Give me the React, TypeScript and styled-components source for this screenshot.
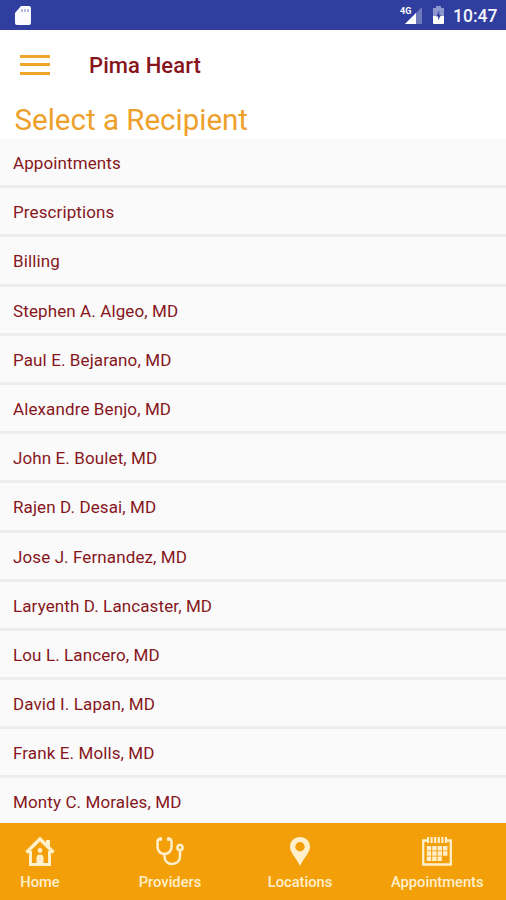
import React from 'react';
import styled, { createGlobalStyle } from 'styled-components';

const GlobalStyle = createGlobalStyle`
  * { box-sizing: border-box; }
  body { margin: 0; background: #fff; font-family: Roboto, sans-serif; overflow: hidden; }
`;

const Screen = styled.div`
  width: 506px;
  height: 900px;
  display: flex;
  flex-direction: column;
  overflow: hidden;
  background: #fff;
`;

const StatusBar = styled.div`
  flex: none;
  height: 30px;
  padding: 0 9px 0 14px;
  display: flex;
  align-items: center;
  justify-content: space-between;
  background: #303f9f;
  color: #f4f5fc;
`;

const StatusIcons = styled.div`
  display: flex;
  align-items: center;
  gap: 8px;
`;

const Clock = styled.span`
  width: 44px;
  padding-top: 2px;
  font-size: 17.5px;
  line-height: 20px;
  font-weight: 500;
  white-space: nowrap;
`;

const Header = styled.header`
  flex: none;
  height: 70px;
  padding-left: 20px;
  display: flex;
  align-items: center;
`;

const MenuButton = styled.button`
  width: 30px;
  height: 20px;
  margin: 0 39px 1px 0;
  padding: 0;
  border: 0;
  background: none;
  display: flex;
  flex-direction: column;
  justify-content: space-between;
`;

const MenuLine = styled.span`
  width: 30px;
  height: 3px;
  background: #f0a62b;
`;

const AppName = styled.h1`
  margin: 1px 0 0;
  font-size: 22px;
  line-height: 28px;
  font-weight: 500;
  letter-spacing: 0.1px;
  color: #86141a;
`;

const PageTitle = styled.h2`
  flex: none;
  height: 39px;
  margin: 0;
  padding-left: 14.5px;
  font-size: 29.5px;
  line-height: 40px;
  font-weight: 400;
  color: #eda02a;
`;

const List = styled.ul`
  flex: none;
  height: 684px;
  margin: 0;
  padding: 0;
  list-style: none;
  overflow: hidden;
  background: #fafafa;
`;

const Row = styled.li`
  height: 49.2px;
  padding: 1px 13px 0;
  border-bottom: 3px solid #ededed;
  font-size: 17px;
  line-height: 46px;
  letter-spacing: 0.11px;
  color: #86161c;
`;

const TabBar = styled.nav`
  flex: none;
  height: 77px;
  padding-top: 13px;
  display: flex;
  gap: 50px;
  background: #f39f09;
`;

const Tab = styled.div`
  flex: none;
  min-width: 80px;
  display: flex;
  flex-direction: column;
  align-items: center;
  color: #ffefcb;

  &:last-child {
    margin-left: 1px;
  }
`;

const TabLabel = styled.span`
  margin-top: 6px;
  font-size: 14.7px;
  line-height: 18px;
  font-weight: 500;
`;

const SdCardIcon = () => (
  <svg width="18" height="22" viewBox="0 0 18 22">
    <path d="M7 2h8a2 2 0 0 1 2 2v15a2 2 0 0 1-2 2H3a2 2 0 0 1-2-2V9z" fill="#fafaff" />
    <path d="M8 5v3M11 5v3M14 5v3" stroke="#8d95cb" strokeWidth="1.2" />
  </svg>
);

const SignalIcon = () => (
  <svg width="24" height="20" viewBox="0 0 24 20">
    <path d="M22 2v17H5z" fill="#6f7abd" />
    <path d="M16 8v11H5z" fill="#fff" />
    <text x="0" y="9" fontFamily="Roboto" fontSize="9" fontWeight="700" fill="#fff">4G</text>
  </svg>
);

const BatteryIcon = () => (
  <svg width="13" height="20" viewBox="0 0 13 20">
    <path d="M4 1h5v2h3v8H1V3h3z" fill="#8e97cd" />
    <path d="M1 11h11v7a1 1 0 0 1-1 1H2a1 1 0 0 1-1-1z" fill="#fff" />
    <path d="M7.200 5.500 4.200 11.500h2V15.500L9 10H7.200z" fill="#303f9f" />
  </svg>
);

const HomeIcon = () => (
  <svg width="30" height="31" viewBox="0 0 30 31" fill="none" stroke="currentColor">
    <path d="M1.500 16.500 15 3l13.500 13.500" strokeWidth="3.400" />
    <path d="M21 4h4v8l-4-4z" fill="currentColor" stroke="none" />
    <path d="M5.500 15v13.500h19V15" strokeWidth="3" />
    <path d="M11.500 30v-8a3.500 3.500 0 0 1 7 0v8z" fill="currentColor" stroke="none" />
    <circle cx="15" cy="14.500" r="2.400" fill="currentColor" stroke="none" />
  </svg>
);

const StethoscopeIcon = () => (
  <svg width="30" height="31" viewBox="0 0 30 31" fill="none" stroke="currentColor" strokeWidth="2.500" strokeLinecap="round">
    <path d="M5.500 3H4.500Q2.500 3 2.500 6v5c0 4 3 7 7 7s7-3 7-7V6q0-3-2-3h-1" />
    <path d="M9.500 18v2c0 5 3 8 7.500 8s8-3 8-8v-5.500" />
    <circle cx="25" cy="11.500" r="2.600" />
    <path d="M5.500 2.500v1M13.500 2.500v1" strokeWidth="3.200" />
  </svg>
);

const PinIcon = () => (
  <svg width="22" height="31" viewBox="0 0 22 31">
    <path
      fill="currentColor"
      fillRule="evenodd"
      d="M11 1C5.300 1 1 5.200 1 10.700 1 17 7.500 22 11 30c3.500-8 10-13 10-19.300C21 5.200 16.700 1 11 1zm0 5a4.700 4.700 0 1 1 0 9.400A4.700 4.700 0 0 1 11 6z"
    />
  </svg>
);

const CalendarIcon = () => (
  <svg width="32" height="31" viewBox="0 0 32 31" fill="none" stroke="currentColor">
    <path d="M6 4.500H2.200v24h27.600v-24H26" strokeWidth="2.300" />
    <path d="M7 1v6M10.600 1v6M14.200 1v6M17.800 1v6M21.400 1v6M25 1v6" strokeWidth="2.200" />
    <path d="M5.800 12.300h20.600M5.800 17.500h20.600M5.800 22.700h15" strokeWidth="4.400" strokeDasharray="4.400 1" />
  </svg>
);

const recipients = [
  'Appointments',
  'Prescriptions',
  'Billing',
  'Stephen A. Algeo, MD',
  'Paul E. Bejarano, MD',
  'Alexandre Benjo, MD',
  'John E. Boulet, MD',
  'Rajen D. Desai, MD',
  'Jose J. Fernandez, MD',
  'Laryenth D. Lancaster, MD',
  'Lou L. Lancero, MD',
  'David I. Lapan, MD',
  'Frank E. Molls, MD',
  'Monty C. Morales, MD',
];

const tabs = [
  { label: 'Home', Icon: HomeIcon },
  { label: 'Providers', Icon: StethoscopeIcon },
  { label: 'Locations', Icon: PinIcon },
  { label: 'Appointments', Icon: CalendarIcon },
];

export default function App() {
  return (
    <Screen>
      <GlobalStyle />
      <StatusBar>
        <SdCardIcon />
        <StatusIcons>
          <SignalIcon />
          <BatteryIcon />
          <Clock>10:47</Clock>
        </StatusIcons>
      </StatusBar>
      <Header>
        <MenuButton aria-label="Menu">
          <MenuLine />
          <MenuLine />
          <MenuLine />
        </MenuButton>
        <AppName>Pima Heart</AppName>
      </Header>
      <PageTitle>Select a Recipient</PageTitle>
      <List>
        {recipients.map((name) => (
          <Row key={name}>{name}</Row>
        ))}
      </List>
      <TabBar>
        {tabs.map(({ label, Icon }) => (
          <Tab key={label}>
            <Icon />
            <TabLabel>{label}</TabLabel>
          </Tab>
        ))}
      </TabBar>
    </Screen>
  );
}
